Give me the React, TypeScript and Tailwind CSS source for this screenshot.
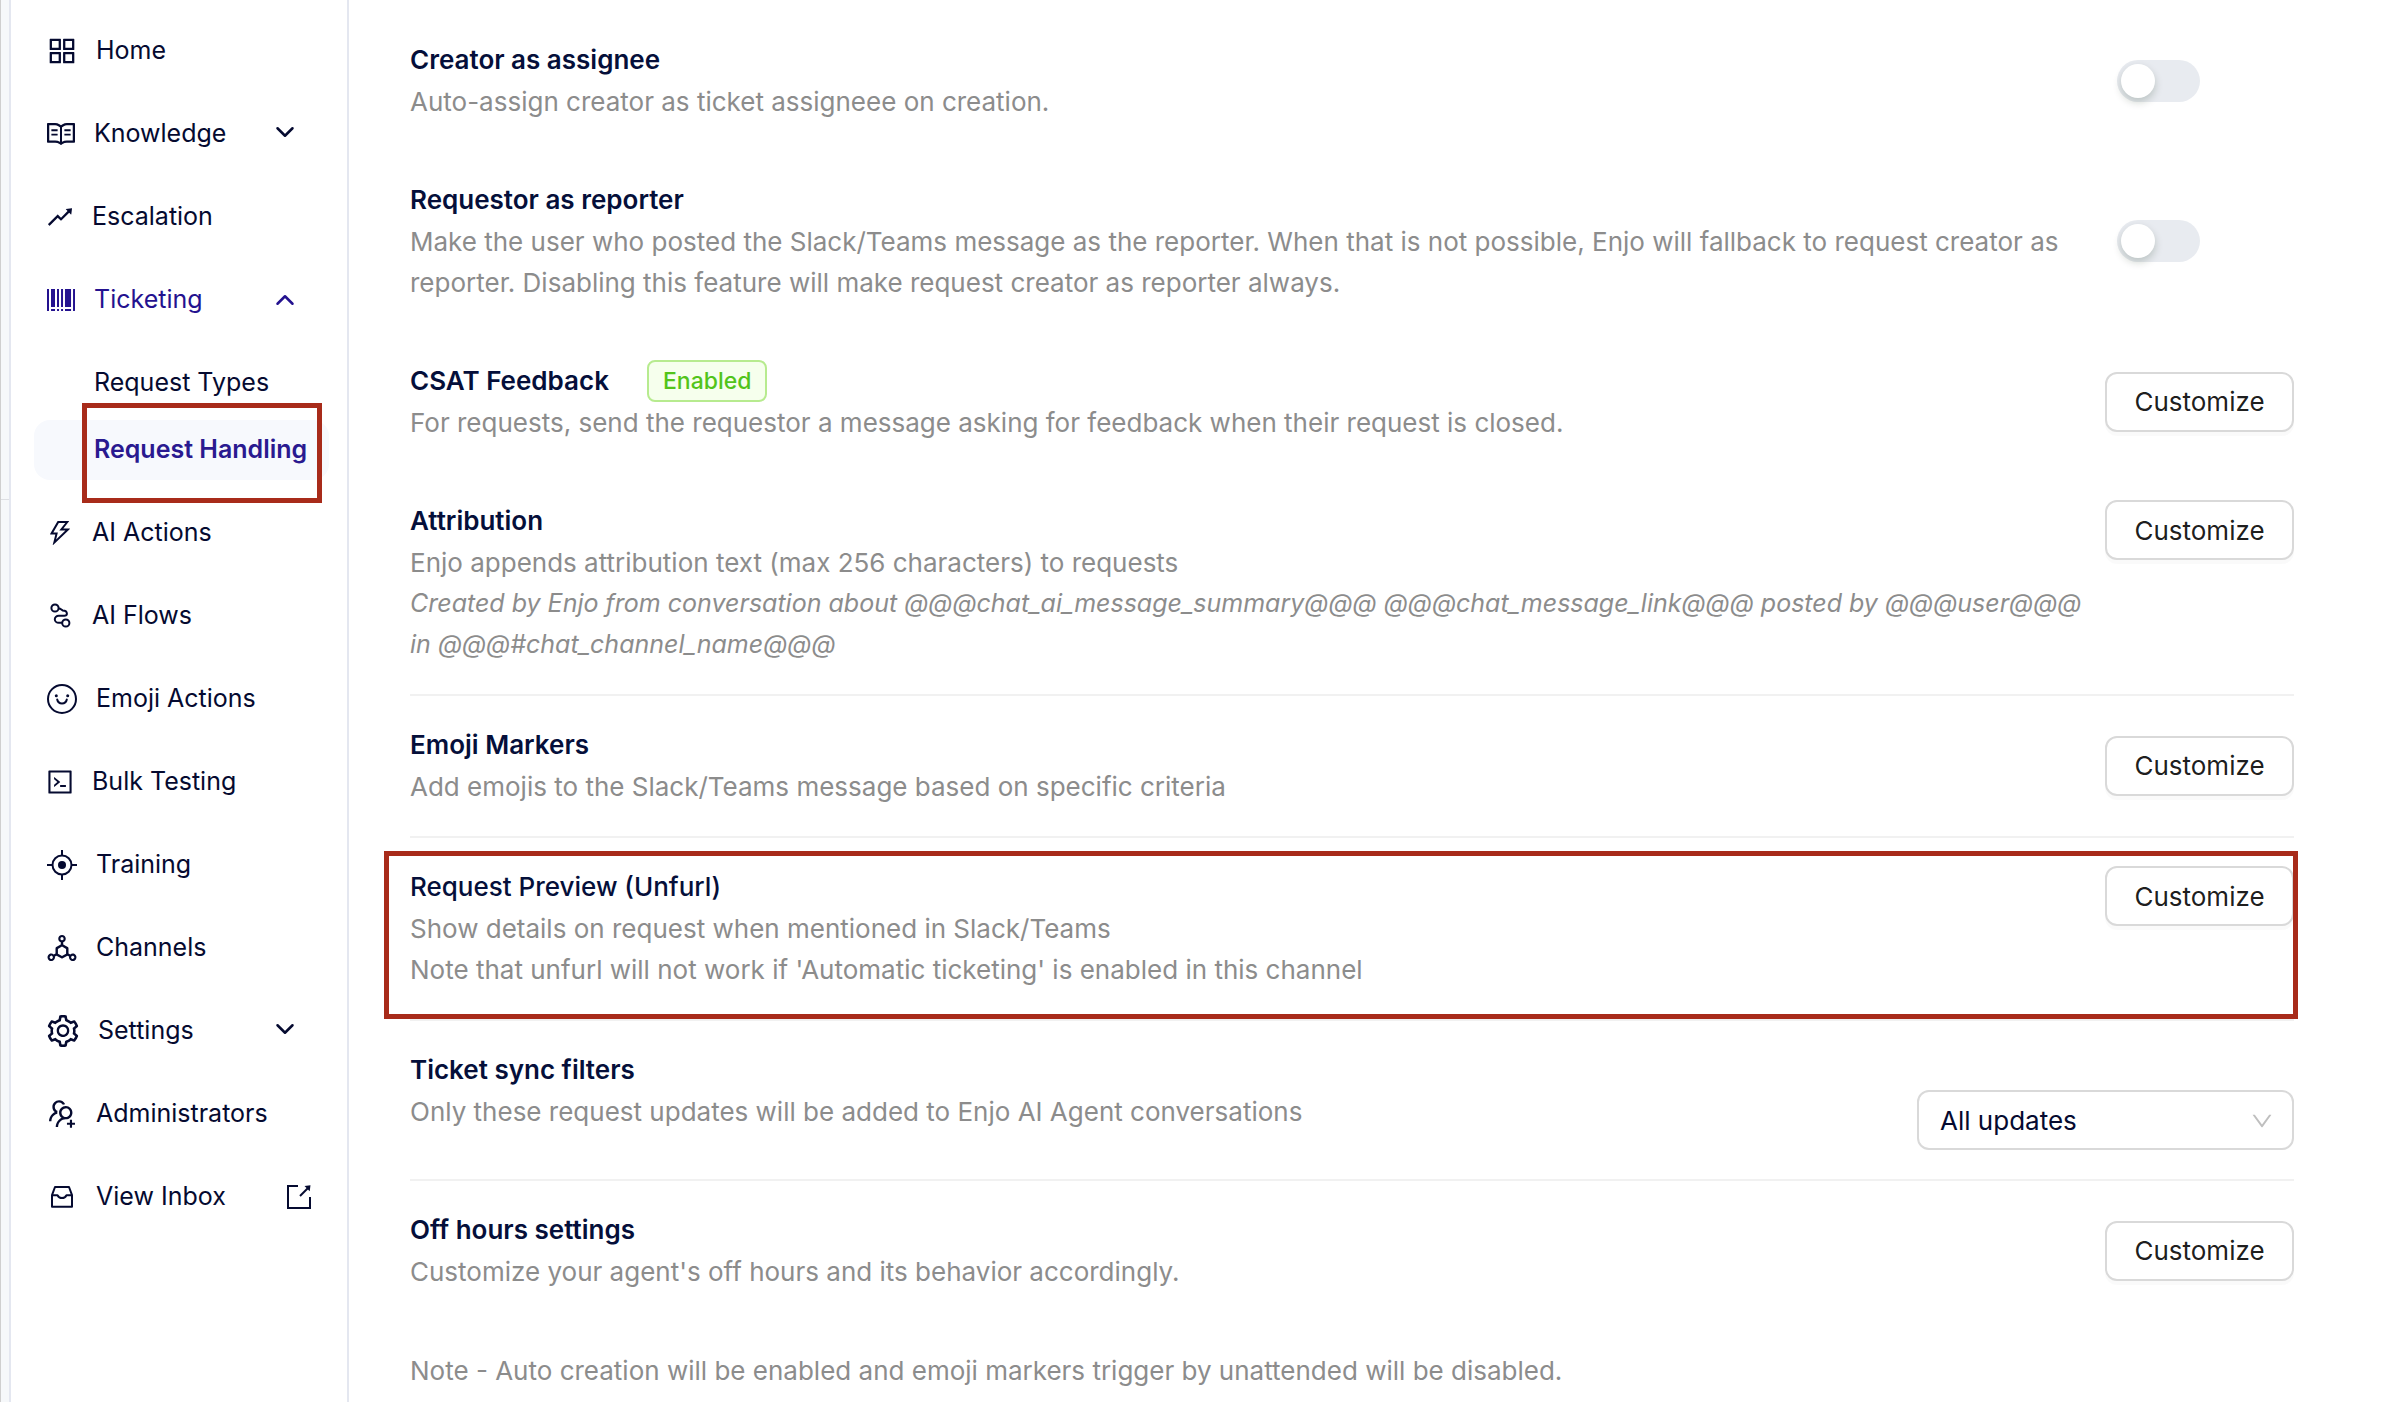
import React from 'react'
import clsx from 'clsx'
import { ChevronDown, ChevronUp } from 'lucide-react'
import {
  AiOutlineAppstore,
  AiOutlineBarcode,
  AiOutlineCode,
  AiOutlineDeploymentUnit,
  AiOutlineDown,
  AiOutlineRead,
  AiOutlineRise,
  AiOutlineSetting,
  AiOutlineThunderbolt,
  AiOutlineUsergroupAdd
} from 'react-icons/ai'

interface IconProps {
  className?: string
}

// antd crops its icons to this box, react-icons keeps the full 1024 canvas
const ANTD_BOX = '64 64 896 896'

const FlowIcon = ({ className }: IconProps) => (
  <svg className={className} viewBox="0 0 26 26" fill="none" stroke="currentColor" strokeWidth={2} aria-hidden="true">
    <circle cx="8" cy="5" r="3.6" />
    <circle cx="18.8" cy="20" r="3.6" />
    <path d="M11.6 5.6c2 0 2.6.9 4 1.8c2.8 0 4.3 1.7 4.300 3.400c0 1.300-1.200 2-2.700 2h-5.500c-2 0-3.900 1.300-3.900 3.400s1.900 3.600 4 3.600h3.400" />
  </svg>
)

const SmileIcon = ({ className }: IconProps) => (
  <svg className={className} viewBox="0 0 30 30" fill="none" stroke="currentColor" strokeWidth={2} aria-hidden="true">
    <circle cx="15" cy="15" r="14" />
    <circle cx="9.3" cy="11.7" r="1.5" fill="currentColor" stroke="none" />
    <circle cx="20.7" cy="11.7" r="1.5" fill="currentColor" stroke="none" />
    <path d="M10.2 15.500a4.900 4.900 0 0 0 9.600 0" strokeLinecap="round" />
  </svg>
)

const TargetIcon = ({ className }: IconProps) => (
  <svg className={className} viewBox="0 0 30 30" fill="none" stroke="currentColor" strokeWidth={2} aria-hidden="true">
    <circle cx="15" cy="15" r="9.500" />
    <circle cx="15" cy="15" r="4" fill="currentColor" stroke="none" />
    <path d="M15 0v5.500M15 24.500V30M0 15h5.500M24.500 15H30" />
  </svg>
)

const InboxIcon = ({ className }: IconProps) => (
  <svg className={className} viewBox="0 0 30 30" fill="none" stroke="currentColor" strokeWidth={2} strokeLinejoin="round" aria-hidden="true">
    <path d="M5 13.200 8 5h14l3 8.200v11.600H5V13.200Z" />
    <path d="M5 13.200h5.500c1 2 2.500 2.800 4.500 2.800s3.500-.8 4.500-2.800H25" />
  </svg>
)

const ExternalIcon = ({ className }: IconProps) => (
  <svg className={className} viewBox="0 0 30 30" fill="none" stroke="currentColor" strokeWidth={2} aria-hidden="true">
    <path d="M14 4H4v22h22V15" />
    <path d="m16 14 8-8" />
    <path d="m20.500 4 6-.800-.800 6Z" fill="currentColor" stroke="none" />
  </svg>
)

interface NavEntry {
  label: string
  icon: React.ElementType
  iconClass: string
  antd?: boolean
  trailing?: 'down' | 'up' | 'external'
  children?: { label: string; active?: boolean }[]
}

const NAV: NavEntry[] = [
  { label: 'Home', icon: AiOutlineAppstore, antd: true, iconClass: 'size-[30px]' },
  { label: 'Knowledge', icon: AiOutlineRead, antd: true, iconClass: 'size-[28px]', trailing: 'down' },
  { label: 'Escalation', icon: AiOutlineRise, antd: true, iconClass: 'size-[26px]' },
  {
    label: 'Ticketing',
    icon: AiOutlineBarcode,
    antd: true,
    iconClass: 'size-[28px]',
    trailing: 'up',
    children: [{ label: 'Request Types' }, { label: 'Request Handling', active: true }]
  },
  { label: 'AI Actions', icon: AiOutlineThunderbolt, antd: true, iconClass: 'size-[26px]' },
  { label: 'AI Flows', icon: FlowIcon, iconClass: 'size-[26px]' },
  { label: 'Emoji Actions', icon: SmileIcon, iconClass: 'size-[30px]' },
  { label: 'Bulk Testing', icon: AiOutlineCode, antd: true, iconClass: 'size-[26px]' },
  { label: 'Training', icon: TargetIcon, iconClass: 'size-[30px]' },
  { label: 'Channels', icon: AiOutlineDeploymentUnit, antd: true, iconClass: 'size-[30px]' },
  { label: 'Settings', icon: AiOutlineSetting, antd: true, iconClass: 'size-[32px]', trailing: 'down' },
  { label: 'Administrators', icon: AiOutlineUsergroupAdd, antd: true, iconClass: 'size-[30px]' },
  { label: 'View Inbox', icon: InboxIcon, iconClass: 'size-[30px]', trailing: 'external' }
]

const NavItem = ({ item }: { item: NavEntry }) => {
  const Icon = item.icon
  const open = item.trailing === 'up'
  const box = item.antd ? { viewBox: ANTD_BOX } : {}

  return (
    <li>
      <a
        href="#"
        className={clsx('flex h-[60px] items-center gap-[19px] rounded-2xl pl-[13px]', open && 'text-[#24128f]')}
      >
        <Icon className={clsx('shrink-0', item.iconClass)} {...box} />
        <span className="whitespace-nowrap">{item.label}</span>
        {item.trailing === 'down' && <ChevronDown className="mr-[29px] mb-1 ml-auto size-[30px]" aria-hidden="true" />}
        {item.trailing === 'up' && <ChevronUp className="mr-[29px] ml-auto size-[30px]" aria-hidden="true" />}
        {item.trailing === 'external' && <ExternalIcon className="mr-[15px] ml-auto size-[30px]" />}
      </a>
      {item.children && (
        <ul className="mt-[23px] flex flex-col gap-[7px]">
          {item.children.map(child => (
            <li key={child.label}>
              <a
                href="#"
                aria-current={child.active ? 'page' : undefined}
                className={clsx(
                  'relative flex h-[60px] items-center rounded-2xl pl-[60px] whitespace-nowrap',
                  child.active && 'bg-[#f7f9fd] font-semibold text-[#2a1a90]'
                )}
              >
                {child.label}
                {child.active && (
                  <span className="absolute -top-[17px] right-[7px] -bottom-[23px] left-12 border-[5px] border-[#a82b1a]" />
                )}
              </a>
            </li>
          ))}
        </ul>
      )}
    </li>
  )
}

const CustomizeButton = ({ label }: { label: string }) => (
  <button
    type="button"
    aria-label={`Customize ${label}`}
    className="h-[60px] w-[189px] shrink-0 rounded-xl border-2 border-[#d9d9d9] bg-white text-black/90 shadow-[0_4px_0_rgba(0,0,0,0.02)]"
  >
    Customize
  </button>
)

const Switch = ({ id }: { id: string }) => (
  <input
    id={id}
    type="checkbox"
    role="switch"
    className="
      mr-[94px] flex h-[42px] w-[83px] shrink-0 appearance-none items-center rounded-full bg-[#e8ebf0] px-1
      before:size-[34px] before:rounded-full before:bg-white before:shadow-[0_4px_8px_rgba(0,35,11,0.2)]
      checked:justify-end checked:bg-[#24128f]
    "
  />
)

interface RowProps {
  title: string
  htmlFor?: string
  tag?: string
  align?: 'center' | 'start' | 'end'
  divider?: boolean
  highlight?: boolean
  light?: boolean
  control: React.ReactNode
  children: React.ReactNode
}

const SettingRow = ({ title, htmlFor, tag, align = 'center', divider, highlight, light, control, children }: RowProps) => (
  <section className={clsx('pt-[28px] pb-[29px]', divider && 'border-b-2 border-[#f1f1f1]')}>
    <div
      className={clsx(
        'relative flex gap-2',
        align === 'center' && 'items-center',
        align === 'start' && 'items-start',
        align === 'end' && 'items-end'
      )}
    >
      <div className="min-w-0 flex-1 self-start">
        <h3
          className={clsx(
            'flex items-center gap-[38px] leading-[42px] text-[#050f3a]',
            light ? 'font-medium' : 'font-semibold'
          )}
        >
          {htmlFor ? <label htmlFor={htmlFor}>{title}</label> : title}
          {tag && (
            <span className="flex h-[42px] items-center rounded-lg border-2 border-[#b7eb8f] bg-[#f6ffed] px-[14px] text-[23px] font-medium text-[#52c41a]">
              {tag}
            </span>
          )}
        </h3>
        <div className="leading-[41px] text-[#8c8c8c]">{children}</div>
      </div>
      {control}
      {highlight && (
        <div className="pointer-events-none absolute -top-[15px] -right-1 -bottom-[29px] -left-[26px] border-[5px] border-[#a82b1a]" />
      )}
    </div>
  </section>
)

const App = () => {
  return (
    <div className="flex min-h-screen bg-white font-['Inter',sans-serif] text-[26px] text-[#050a30]">
      <div className="w-[9px] shrink-0 border-l border-[#cfcfcf] bg-[#f6f8fa]">
        <div className="h-[500px] border-b border-[#dddfe3]" />
      </div>

      <nav className="w-[340px] shrink-0 border-x-2 border-[#e4e7f0] pt-[21px] pr-[18px] pl-[23px] text-[25px]">
        <ul className="flex flex-col gap-[23px]">
          {NAV.map(item => (
            <NavItem key={item.label} item={item} />
          ))}
        </ul>
      </nav>

      <main className="min-w-0 flex-1 pt-[11px] pr-[100px] pb-3 pl-[61px]">
        <SettingRow title="Creator as assignee" htmlFor="creator-assignee" control={<Switch id="creator-assignee" />}>
          <p>Auto-assign creator as ticket assigneee on creation.</p>
        </SettingRow>

        <SettingRow title="Requestor as reporter" htmlFor="requestor-reporter" control={<Switch id="requestor-reporter" />}>
          <p>
            Make the user who posted the Slack/Teams message as the reporter. When that is not possible, Enjo will
            fallback to request creator as
            <br />
            reporter. Disabling this feature will make request creator as reporter always.
          </p>
        </SettingRow>

        <SettingRow title="CSAT Feedback" tag="Enabled" control={<CustomizeButton label="CSAT Feedback" />}>
          <p>For requests, send the requestor a message asking for feedback when their request is closed.</p>
        </SettingRow>

        <SettingRow title="Attribution" align="start" divider control={<CustomizeButton label="Attribution" />}>
          <p>Enjo appends attribution text (max 256 characters) to requests</p>
          <p className="text-[25px] leading-[41px] italic">
            Created by Enjo from conversation about @@@chat_ai_message_summary@@@ @@@chat_message_link@@@ posted by
            @@@user@@@
            <br />
            in @@@#chat_channel_name@@@
          </p>
        </SettingRow>

        <SettingRow title="Emoji Markers" divider control={<CustomizeButton label="Emoji Markers" />}>
          <p>Add emojis to the Slack/Teams message based on specific criteria</p>
        </SettingRow>

        <SettingRow
          title="Request Preview (Unfurl)"
          align="start"
          divider
          highlight
          light
          control={<CustomizeButton label="Request Preview" />}
        >
          <p>Show details on request when mentioned in Slack/Teams</p>
          <p>Note that unfurl will not work if 'Automatic ticketing' is enabled in this channel</p>
        </SettingRow>

        <SettingRow
          title="Ticket sync filters"
          htmlFor="sync-filter"
          align="end"
          divider
          control={
            <div className="relative mt-[41px] w-[377px] shrink-0">
              <select
                id="sync-filter"
                className="h-[60px] w-full appearance-none rounded-xl border-2 border-[#d9d9d9] bg-white pl-[21px]"
              >
                <option>All updates</option>
              </select>
              <AiOutlineDown
                viewBox={ANTD_BOX}
                className="pointer-events-none absolute top-5 right-[21px] size-[22px] text-[#bfbfbf]"
              />
            </div>
          }
        >
          <p>Only these request updates will be added to Enjo AI Agent conversations</p>
        </SettingRow>

        <SettingRow title="Off hours settings" control={<CustomizeButton label="Off hours settings" />}>
          <p>Customize your agent's off hours and its behavior accordingly.</p>
        </SettingRow>

        <p className="mt-[29px] leading-[41px] text-[#8c8c8c]">
          Note - Auto creation will be enabled and emoji markers trigger by unattended will be disabled.
        </p>
      </main>
    </div>
  )
}

export default App
